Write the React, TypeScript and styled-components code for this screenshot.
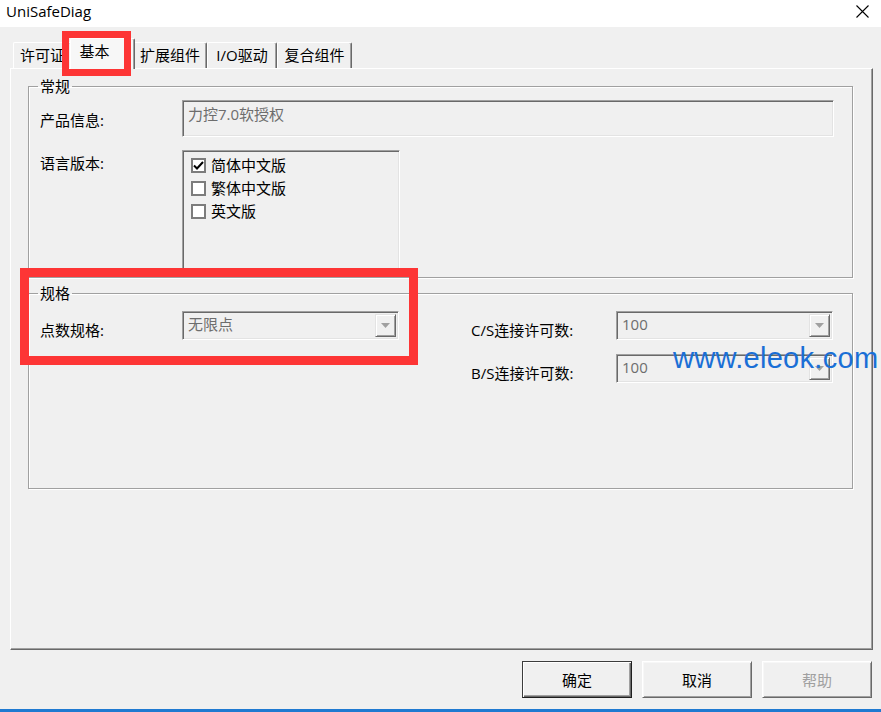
import styled, { createGlobalStyle } from "styled-components";

const GlobalStyle = createGlobalStyle`
  html, body {
    margin: 0;
    padding: 0;
    background: #f0f0f0;
  }
  body {
    font-family: "Open Sans", "Noto Sans CJK SC", sans-serif;
    font-size: 15px;
    color: #000;
  }
`;

// dialog frame
const Dialog = styled.div`
  position: relative;
  width: 881px;
  height: 712px;
  overflow: hidden;
  display: flex;
  flex-direction: column;
  background: #f0f0f0;
`;

const TitleBar = styled.header`
  height: 27px;
  flex: none;
  box-sizing: border-box;
  padding: 1px 12px 0 6px;
  background: #fff;
  display: flex;
  justify-content: space-between;
  align-items: flex-start;
`;

const Title = styled.div`
  font-size: 15px;
  line-height: 20px;
`;

const CloseIcon = styled.svg`
  margin-top: 4px;
`;

// tabs
const TabStrip = styled.div`
  flex: none;
  height: 30px;
  margin: 11px 0 0 13px;
  display: flex;
  align-items: flex-end;
  position: relative;
  z-index: 1;
`;

const Tab = styled.div<{ $active?: boolean; $w: number }>`
  box-sizing: border-box;
  width: ${(p) => p.$w}px;
  height: ${(p) => (p.$active ? 31 : 26)}px;
  margin: 0 ${(p) => (p.$active ? -2 : 0)}px ${(p) => (p.$active ? -1 : 0)}px;
  padding: 2px ${(p) => (p.$active ? 16 : 0)}px 0 0;
  background: ${(p) => (p.$active ? "#f7f7f7" : "#f0f0f0")};
  border: 1px solid #fff;
  border-bottom: none;
  border-right-color: #696969;
  border-radius: 2px 2px 0 0;
  box-shadow: inset -1px 0 0 #a0a0a0;
  text-align: center;
  font-size: 15px;
  line-height: 20px;
  white-space: nowrap;
  position: relative;
  z-index: ${(p) => (p.$active ? 2 : 1)};
`;

const TabPanel = styled.section`
  flex: none;
  box-sizing: border-box;
  width: 863px;
  height: 582px;
  margin-left: 10px;
  padding: 7px 19px 0 17px;
  border: 1px solid #fff;
  border-right-color: #696969;
  border-bottom-color: #696969;
  box-shadow: inset -1px -1px 0 #a0a0a0;
`;

// group boxes
const Group = styled.fieldset<{ $h: number; $top: number }>`
  box-sizing: border-box;
  height: ${(p) => p.$h}px;
  min-width: 0;
  margin: 0 0 5px 0;
  padding: ${(p) => p.$top}px 16px 0 11px;
  border: 1px solid #a0a0a0;
  box-shadow: 1px 1px 0 #fff, inset 1px 1px 0 #fff;
`;

const Legend = styled.legend`
  margin-left: -2px;
  padding: 0 2px;
  font-size: 15px;
  line-height: 20px;
`;

const GeneralGrid = styled.div`
  display: grid;
  grid-template-columns: 142px 652px;
  grid-template-rows: 37px 120px;
  row-gap: 13px;
`;

const SpecGrid = styled.div`
  display: grid;
  grid-template-columns: 142px 217px 72px 145px 217px;
  grid-template-rows: 29px 29px;
  row-gap: 14px;
`;

const Label = styled.div<{ $top: number; $col?: number; $row?: number }>`
  padding-top: ${(p) => p.$top}px;
  font-size: 15px;
  line-height: 20px;
  white-space: nowrap;
  grid-column: ${(p) => p.$col ?? "auto"};
  grid-row: ${(p) => p.$row ?? "auto"};
`;

const Sunken = styled.div`
  box-sizing: border-box;
  border: 1px solid #fff;
  border-top-color: #a0a0a0;
  border-left-color: #a0a0a0;
  box-shadow: inset 1px 1px 0 #696969, inset -1px -1px 0 #e3e3e3;
  background: #f0f0f0;
`;

const TextBox = styled(Sunken)`
  padding: 3px 5px;
  color: #6d6d6d;
  font-size: 15px;
  line-height: 20px;
`;

const ListBox = styled(Sunken)`
  width: 218px;
  padding: 4px 0 0 8px;
  display: flex;
  flex-direction: column;
  gap: 3px;
`;

const CheckRow = styled.label`
  display: flex;
  align-items: center;
  gap: 5px;
  font-size: 15px;
  line-height: 20px;
`;

const CheckBox = styled.span`
  box-sizing: border-box;
  width: 15px;
  height: 15px;
  border: 2px solid #7c7c7c;
  background: #fff;
  display: flex;
  align-items: center;
  justify-content: center;
`;

const Combo = styled(Sunken)<{ $col: number; $row: number }>`
  grid-column: ${(p) => p.$col};
  grid-row: ${(p) => p.$row};
  display: flex;
  padding: 2px;
  color: #6d6d6d;
  font-size: 15px;
  line-height: 20px;
`;

const ComboText = styled.div`
  flex: 1;
  padding: 0 3px;
`;

const ComboButton = styled.div`
  box-sizing: border-box;
  width: 21px;
  border: 1px solid #e3e3e3;
  border-right-color: #696969;
  border-bottom-color: #696969;
  box-shadow: inset 1px 1px 0 #fff, inset -1px -1px 0 #a0a0a0;
  display: flex;
  align-items: center;
  justify-content: center;
`;

// buttons
const ButtonRow = styled.div`
  flex: none;
  display: flex;
  justify-content: flex-end;
  gap: 10px;
  margin: 11px 9px 11px 0;
`;

const Button = styled.button<{ $default?: boolean }>`
  box-sizing: border-box;
  width: 110px;
  height: 37px;
  padding: 0;
  background: #f0f0f0;
  font-family: inherit;
  font-size: 15px;
  color: ${(p) => (p.disabled ? "#a0a0a0" : "#000")};
  border: 1px solid ${(p) => (p.$default ? "#3c3c3c" : "#fff")};
  border-right-color: ${(p) => (p.$default ? "#1e1e1e" : "#696969")};
  border-bottom-color: ${(p) => (p.$default ? "#1e1e1e" : "#696969")};
  box-shadow: ${(p) =>
    p.$default
      ? "inset 1px 1px 0 #fff, inset -1px -1px 0 #696969, inset -2px -2px 0 #a0a0a0"
      : "inset 1px 1px 0 #f7f7f7, inset -1px -1px 0 #a0a0a0"};
`;

const TaskEdge = styled.div`
  flex: none;
  height: 3px;
  background: #1f7ad1;
`;

// annotations drawn over the dialog
const Marker = styled.div<{ $x: number; $y: number; $w: number; $h: number; $t: number }>`
  position: absolute;
  left: ${(p) => p.$x}px;
  top: ${(p) => p.$y}px;
  width: ${(p) => p.$w}px;
  height: ${(p) => p.$h}px;
  box-sizing: border-box;
  border: ${(p) => p.$t}px solid #fd3535;
  z-index: 5;
`;

const Watermark = styled.div`
  position: absolute;
  left: 673px;
  top: 342px;
  font-family: "Liberation Sans", Arial, sans-serif;
  font-size: 29px;
  letter-spacing: 0.3px;
  line-height: normal;
  color: #1a6fd6;
  white-space: nowrap;
  z-index: 6;
`;

const Arrow = () => (
  <svg width="9" height="5" viewBox="0 0 9 5">
    <path d="M0 0h9L4.5 5z" fill="#a0a0a0" />
  </svg>
);

const Check = ({ on }: { on?: boolean }) => (
  <CheckBox>
    {on && (
      <svg width="11" height="9" viewBox="0 0 11 9">
        <path d="M1 4.5l3 3L10 1" stroke="#000" strokeWidth="2" fill="none" />
      </svg>
    )}
  </CheckBox>
);

const tabs = [
  { label: "许可证", w: 59 },
  { label: "基本", w: 65, active: true },
  { label: "扩展组件", w: 74 },
  { label: "I/O驱动", w: 70 },
  { label: "复合组件", w: 75 },
];

const languages = [
  { label: "简体中文版", on: true },
  { label: "繁体中文版" },
  { label: "英文版" },
];

export default function App() {
  return (
    <Dialog>
      <GlobalStyle />
      <TitleBar>
        <Title>UniSafeDiag</Title>
        <CloseIcon width="13" height="13" viewBox="0 0 13 13">
          <path d="M0.5 0.5L12.5 12.5M12.5 0.5L0.5 12.5" stroke="#000" strokeWidth="1.1" />
        </CloseIcon>
      </TitleBar>

      <TabStrip>
        {tabs.map((t) => (
          <Tab key={t.label} $w={t.w} $active={t.active}>
            {t.label}
          </Tab>
        ))}
      </TabStrip>

      <TabPanel>
        <Group $h={202} $top={4}>
          <Legend>常规</Legend>
          <GeneralGrid>
            <Label $top={10}>产品信息:</Label>
            <TextBox>力控7.0软授权</TextBox>
            <Label $top={3}>语言版本:</Label>
            <ListBox>
              {languages.map((l) => (
                <CheckRow key={l.label}>
                  <Check on={l.on} />
                  {l.label}
                </CheckRow>
              ))}
            </ListBox>
          </GeneralGrid>
        </Group>

        <Group $h={206} $top={8}>
          <Legend>规格</Legend>
          <SpecGrid>
            <Label $top={9} $col={1} $row={1}>点数规格:</Label>
            <Combo $col={2} $row={1}>
              <ComboText>无限点</ComboText>
              <ComboButton><Arrow /></ComboButton>
            </Combo>
            <Label $top={9} $col={4} $row={1}>C/S连接许可数:</Label>
            <Combo $col={5} $row={1}>
              <ComboText>100</ComboText>
              <ComboButton><Arrow /></ComboButton>
            </Combo>
            <Label $top={9} $col={4} $row={2}>B/S连接许可数:</Label>
            <Combo $col={5} $row={2}>
              <ComboText>100</ComboText>
              <ComboButton><Arrow /></ComboButton>
            </Combo>
          </SpecGrid>
        </Group>
      </TabPanel>

      <ButtonRow>
        <Button $default>确定</Button>
        <Button>取消</Button>
        <Button disabled>帮助</Button>
      </ButtonRow>
      <TaskEdge />

      <Marker $x={62} $y={31} $w={69} $h={45} $t={7} />
      <Marker $x={20} $y={268} $w={398} $h={97} $t={9} />
      <Watermark>www.eleok.com</Watermark>
    </Dialog>
  );
}
